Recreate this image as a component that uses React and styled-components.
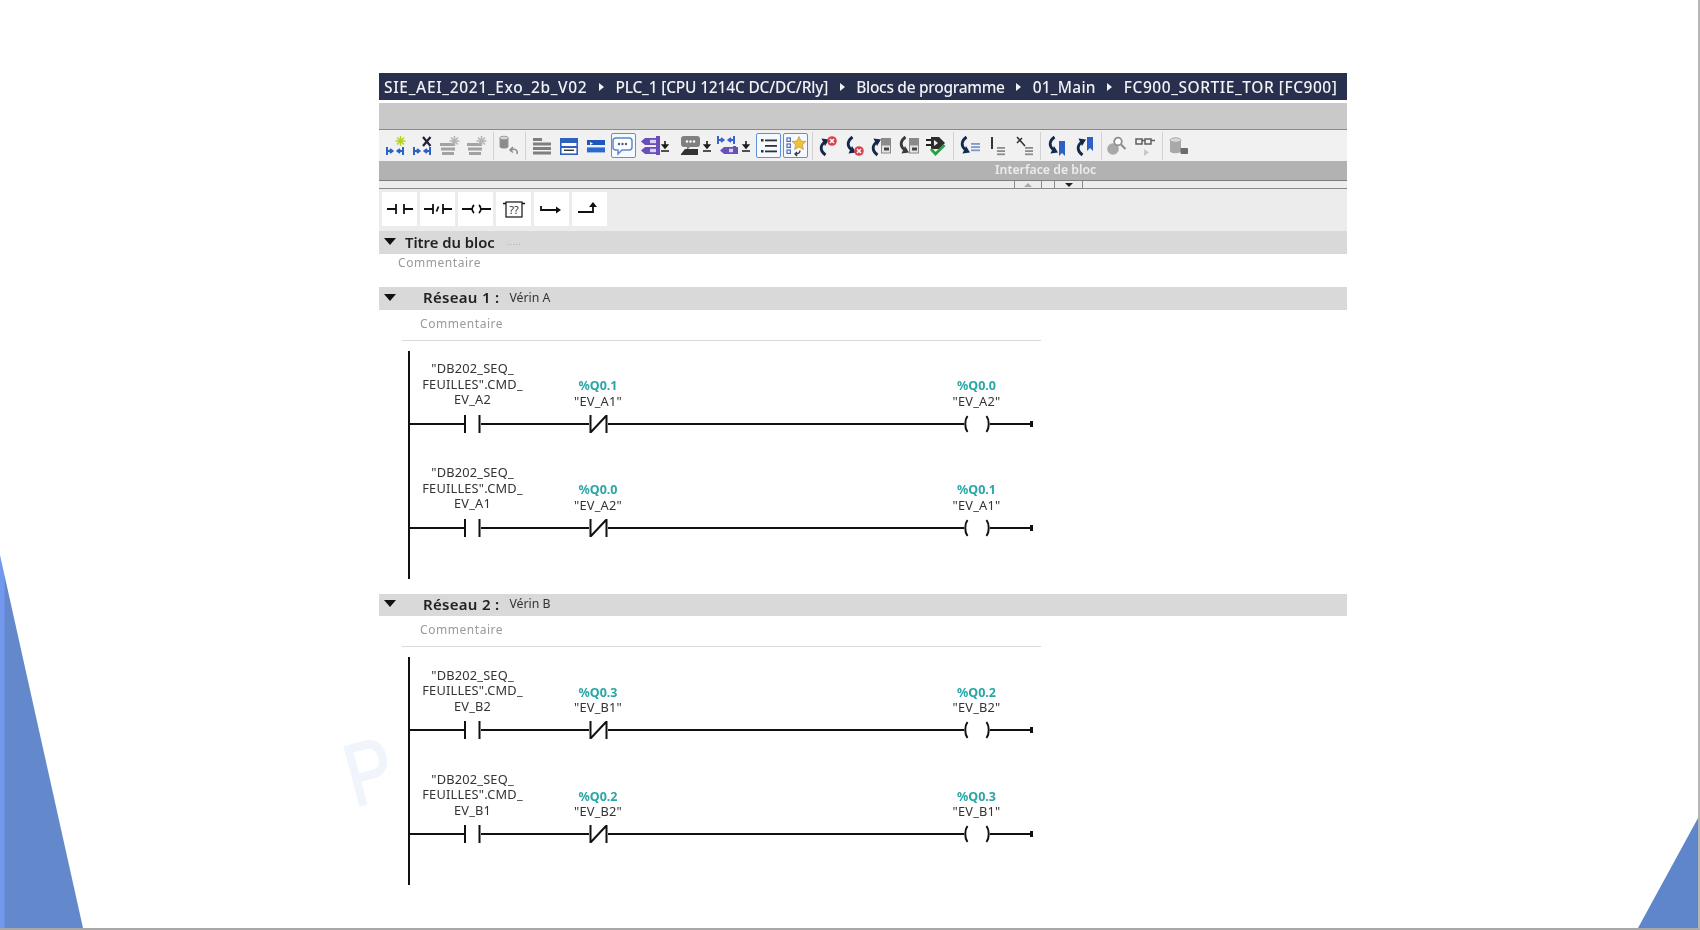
import React from "react";
import styled, { createGlobalStyle } from "styled-components";

const GlobalStyle = createGlobalStyle`
  html, body {
    margin: 0;
    padding: 0;
    background: #fff;
    overflow: hidden;
  }
`;

const FONT = `"Noto Sans", "Open Sans", sans-serif`;

/* small shared drawings for the toolbar */
const Brackets = ({ x = 0, y = 0, c = "#2b62c4" }) => (
  <path
    transform={`translate(${x} ${y})`}
    d="M1 0v8M1 4h4M4 2l2.500 2L4 6M17 0v8M17 4h-4M14 2l-2.500 2L14 6"
    fill="none"
    stroke={c}
    strokeWidth="2"
  />
);

const Stack = ({ c = "#a2a2a2" }) => (
  <g fill={c}>
    <rect x="1" y="8" width="14" height="3" />
    <rect x="2" y="12.500" width="14" height="3" />
    <rect x="3" y="17" width="12" height="3" />
  </g>
);

const Spark = ({ c }) => (
  <path d="M15.500 1v10M10.500 6h10M12 2.500l7 7M19 2.500l-7 7" stroke={c} strokeWidth="1.500" fill="none" />
);

const Cylinder = ({ c = "#a3a3a3" }) => (
  <g>
    <path d="M2 5v11c0 3 11 3 11 0V5z" fill={c} />
    <ellipse cx="7.500" cy="5" rx="5.500" ry="2.200" fill="#d8d8d8" stroke={c} />
  </g>
);

const Tag = ({ y = 0, c = "#6b4fb8" }) => (
  <g transform={`translate(0 ${y})`}>
    <path d="M4 2h14v7H4L0 5.500z" fill={c} />
    <rect x="9" y="3.800" width="7" height="3.400" fill="#d8cff2" />
  </g>
);

const DownLoad = ({ x }) => (
  <path transform={`translate(${x} 6)`} d="M4 0v5M1.500 4l2.500 3 2.500-3zM0 10h8" stroke="#1c1c1c" strokeWidth="1.600" fill="#1c1c1c" />
);

const Bubble = ({ c = "#5b8ad0", f = "#fff" }) => (
  <path d="M4 3h13q3 0 3 3v6q0 3-3 3H10l-4 4v-4H4q-3 0-3-3V6q0-3 3-3z" fill={f} stroke={c} strokeWidth="1.500" />
);

/* curved jump arrow: head on top, or on the bottom when flipped */
const CurveArrow = ({ flip, c = "#14284a" }) => (
  <g transform={flip ? "translate(0 22) scale(1 -1)" : undefined}>
    <path d="M10.500 20C5 16 5 11 9 7.500" fill="none" stroke={c} strokeWidth="2.800" />
    <path d="M6.500 3.500L14 4.500 10 11z" fill={c} />
  </g>
);

const RedX = ({ x, y }) => (
  <g transform={`translate(${x} ${y})`}>
    <circle r="4.800" fill="#d8434f" />
    <path d="M-2-2l4 4M2-2l-4 4" stroke="#fff" strokeWidth="1.500" />
  </g>
);

const Lines = ({ x = 11, y = 10, c = "#8d8d8d", w = 8 }) => (
  <g fill={c}>
    <rect x={x} y={y} width={w} height="1.800" />
    <rect x={x} y={y + 3.200} width={w} height="1.800" />
    <rect x={x} y={y + 6.400} width={w} height="1.800" />
  </g>
);

const Sheet01 = ({ x = 11 }) => (
  <g transform={`translate(${x} 3)`}>
    <rect width="10" height="7" fill="#8a8a8a" />
    <rect x=".5" y="7" width="9" height="8" fill="#e4e4e4" stroke="#8a8a8a" />
    <rect x="3" y="9.500" width="5" height="3" fill="#444" />
  </g>
);

const tools = [
  { w: 27, svg: <><Brackets x={1} y={12} /><Spark c="#b4d324" /></> },
  { w: 27, svg: <><Brackets x={1} y={12} /><path d="M11 2l7.500 9M18.500 2L11 11" stroke="#1d2233" strokeWidth="2.200" /></> },
  { w: 27, svg: <><Stack /><Spark c="#b4b4b4" /></> },
  { w: 27, svg: <><Stack /><Spark c="#b4b4b4" /></> },
  { sep: [2, 1] },
  { w: 27, svg: <><g transform="translate(1 -1) scale(.8)"><Cylinder c="#8c8c8c" /></g><path d="M20 19c1-4-2-6-6-4M16 12l-3 3 3 2.500" stroke="#8a8a8a" strokeWidth="1.500" fill="none" /></> },
  { sep: [3, 3] },
  {
    w: 27,
    svg: (
      <g fill="#7f7f7f">
        <rect x="2" y="3" width="9" height="3" />
        <rect x="2" y="7.500" width="18" height="3" />
        <rect x="2" y="12" width="18" height="3" />
        <rect x="2" y="16.500" width="18" height="3" />
      </g>
    ),
  },
  {
    w: 27,
    svg: (
      <g>
        <rect x="2.800" y="3.800" width="16.400" height="15.400" fill="#fff" stroke="#2f62bd" strokeWidth="1.600" />
        <rect x="3" y="4" width="16" height="4" fill="#2f62bd" />
        <rect x="3" y="11" width="16" height="2" fill="#2f62bd" />
        <rect x="6" y="14.600" width="10" height="1.400" fill="#333" />
      </g>
    ),
  },
  {
    w: 27,
    svg: (
      <g>
        <rect x="2" y="5" width="18" height="5" fill="#1f55bd" />
        <rect x="2" y="10" width="18" height="2.400" fill="#e8f0ff" />
        <rect x="2" y="12.400" width="18" height="5" fill="#2a6ad0" />
        <path d="M5 7l3 1.500-3 1.500z" fill="#fff" />
      </g>
    ),
  },
  { w: 27, on: true, svg: <><Bubble /><g fill="#3f5f92"><circle cx="7" cy="9" r="1.200" /><circle cx="10.500" cy="9" r="1.200" /><circle cx="14" cy="9" r="1.200" /></g></> },
  {
    w: 38,
    vb: 38,
    svg: (
      <>
        <g transform="translate(4 1)">
          <Tag />
          <Tag y={9} />
          <rect x="15" y="0" width="4" height="19" fill="#6b4fb8" />
        </g>
        <DownLoad x={24} />
      </>
    ),
  },
  {
    w: 38,
    vb: 38,
    svg: (
      <>
        <g transform="translate(6 0)">
          <path d="M3 1h13q3 0 3 3v5q0 3-3 3H9l-3 3v-3H3q-3 0-3-3V4q0-3 3-3z" fill="#808080" />
          <g fill="#fff"><circle cx="6" cy="6.500" r="1.200" /><circle cx="9.500" cy="6.500" r="1.200" /><circle cx="13" cy="6.500" r="1.200" /></g>
          <path d="M0 19l4-5h13v6H0z" fill="#333" />
        </g>
        <DownLoad x={28} />
      </>
    ),
  },
  {
    w: 42,
    vb: 42,
    svg: (
      <>
        <Brackets x={4} y={1} c="#3a62cf" />
        <g transform="translate(7 10)"><Tag /></g>
        <rect x="20" y="11" width="3" height="8" fill="#6b4fb8" />
        <DownLoad x={29} />
      </>
    ),
  },
  {
    w: 28,
    on: true,
    svg: (
      <g fill="#333">
        <rect x="3" y="4" width="2.500" height="2.500" />
        <rect x="7" y="4.500" width="12" height="1.800" />
        <rect x="7" y="10" width="12" height="1.800" />
        <rect x="3" y="15" width="2.500" height="2.500" />
        <rect x="7" y="15.500" width="12" height="1.800" />
      </g>
    ),
  },
  {
    w: 26,
    on: true,
    svg: (
      <>
        <g fill="none" stroke="#4f6fb5" strokeWidth="1.200">
          <rect x="2" y="3" width="3.400" height="3.400" />
          <rect x="2" y="9" width="3.400" height="3.400" />
          <rect x="2" y="15" width="3.400" height="3.400" />
        </g>
        <path d="M14 1.500l2 4.500 5 .5-3.600 3.200 1 4.800L14 12l-4.400 2.500 1-4.800L7 6.500l5-.5z" fill="#f0c23a" stroke="#b98d1e" strokeWidth=".6" />
        <path d="M15 15.500c0 2.500-2 3.500-5 3.500M12 17l-2 2 2 2" stroke="#333" strokeWidth="1.300" fill="none" />
      </>
    ),
  },
  { sep: [3, 0] },
  { w: 26, svg: <><CurveArrow /><RedX x={17} y={6} /></> },
  { w: 28, svg: <><CurveArrow flip /><RedX x={17} y={16} /></> },
  { w: 29, svg: <><g transform="translate(-3 0)"><CurveArrow /></g><Sheet01 /></> },
  { w: 27, svg: <><g transform="translate(-3 0)"><CurveArrow flip c="#3a3a3a" /></g><Sheet01 /></> },
  {
    w: 27,
    svg: (
      <>
        <path d="M1 5h5M1 10h5" stroke="#222" strokeWidth="1.800" />
        <path d="M6 2h8l6 6-6 6H6z" fill="#2d2d2d" />
        <path d="M9 5l4 3-4 3z" fill="#eee" />
        <path d="M6 14l4.500 5 9-9" stroke="#2e9e45" strokeWidth="2.800" fill="none" />
      </>
    ),
  },
  { sep: [3, 3] },
  { w: 27, svg: <><g transform="translate(-3 0)"><CurveArrow flip c="#122a50" /></g><Lines x={12} y={8} c="#7d9ad0" w={9} /></> },
  { w: 28, svg: <><rect x="4" y="2" width="2" height="12" fill="#333" /><Lines x={10} y={12} /></> },
  { w: 26, svg: <><path d="M3 2l8 9M3 8l5-5" stroke="#333" strokeWidth="1.600" /><Lines x={11} y={12} /></> },
  { sep: [2, 3] },
  { w: 27, svg: <><g transform="translate(-2 0)"><CurveArrow flip c="#122a50" /></g><path d="M13 6h6v15l-3-3-3 3z" fill="#2c62c8" /></> },
  { w: 27, svg: <><g transform="translate(-1 0)"><CurveArrow /></g><path d="M14 2h6v14l-3-3-3 3z" fill="#2c62c8" /></> },
  { sep: [3, 0] },
  {
    w: 28,
    svg: (
      <>
        <circle cx="8" cy="14" r="5.800" fill="#a8a8a8" />
        <circle cx="13" cy="6.500" r="3.800" fill="#fff" stroke="#8d8d8d" strokeWidth="1.800" />
        <path d="M16 9.500l4.500 4.500" stroke="#8d8d8d" strokeWidth="2.200" />
      </>
    ),
  },
  {
    w: 31,
    svg: (
      <>
        <path d="M2 4h6v5H2zM11 4h6v5h-6zM8 5.500h3M17 5.500h4" fill="none" stroke="#5f5f5f" strokeWidth="1.500" />
        <path d="M10 14l5 3.500-5 3.500z" fill="#c8c8c8" />
      </>
    ),
  },
  { sep: [1, 3] },
  { w: 26, svg: <><Cylinder c="#a9a9a9" /><rect x="12.500" y="13" width="7.500" height="6" rx="1" fill="#6c6c6c" /></> },
];

const Corners = styled.div`
  position: absolute;
  bottom: 0;
  ${(p) =>
    p.$side === "left"
      ? `left: 0; width: 83px; height: 373px;
         background: linear-gradient(90deg, #7399ee 0, #7399ee 4px, #6488cc 5px);
         clip-path: polygon(0 0, 100% 100%, 0 100%);`
      : `right: 0; width: 60px; height: 110px; background: #5f86cb;
         clip-path: polygon(100% 0, 100% 100%, 0 100%);`}
`;

const Watermark = styled.span`
  position: absolute;
  left: 340px;
  top: 728px;
  font: 400 88px/1 "Liberation Sans", sans-serif;
  color: #f0f5fb;
  -webkit-text-stroke: 2px #f0f5fb;
  transform: rotate(-15deg) scaleX(0.8);
`;

const Page = styled.div`
  position: relative;
  box-sizing: border-box;
  width: 1700px;
  height: 930px;
  padding: 73px 0 0 379px;
  background: #fff;
  border-right: 2px solid #b5b5b5;
  border-bottom: 2px solid #a8a8a8;
  font-family: ${FONT};
  overflow: hidden;
`;

const Panel = styled.div`
  position: relative;
  width: 968px;
  filter: blur(0.35px);
`;

const PathBar = styled.div`
  display: flex;
  align-items: center;
  gap: 11.500px;
  height: 27px;
  padding-left: 5px;
  background: #28304d;
  color: #f2f3f6;
  font-size: 15.500px;
  font-weight: 500;
  white-space: nowrap;
`;

const PathArrow = styled.span`
  width: 0;
  height: 0;
  border-left: 5px solid #f2f3f6;
  border-top: 4.500px solid transparent;
  border-bottom: 4.500px solid transparent;
`;

const Crumb = styled.span`
  letter-spacing: ${(p) => p.$ls}px;
`;

const EmptyBand = styled.div`
  height: 26px;
  margin-top: 3px;
  background: #c9c9c9;
  border-bottom: 1px solid #8a8a8a;
`;

const Toolbar = styled.div`
  display: flex;
  align-items: center;
  height: 31px;
  padding-left: 3.500px;
  background: #f1f1f1;
`;

const ToolSlot = styled.div`
  flex: none;
  display: flex;
  align-items: center;
  justify-content: center;
  width: ${(p) => p.$w}px;
  height: 26px;
`;

const ToolBox = styled.div`
  display: flex;
  align-items: center;
  justify-content: center;
  width: 25px;
  height: 25px;
  box-sizing: border-box;
  background: ${(p) => (p.$on ? "#f6f9ff" : "transparent")};
  border: ${(p) => (p.$on ? "1px solid #5f8fd8" : "0")};
  border-radius: 2px;
`;

const ToolSep = styled.span`
  flex: none;
  width: 1px;
  height: 28px;
  margin-left: ${(p) => p.$l}px;
  margin-right: ${(p) => p.$r}px;
  background: #d2d2d2;
`;

const InterfaceBand = styled.div`
  height: 19px;
  padding-left: 616px;
  background: #b2b2b2;
  border-bottom: 1px solid #7e7e7e;
  color: #ececec;
  font-size: 12.300px;
  font-weight: 600;
  line-height: 18px;
`;

const Strip = styled.div`
  display: flex;
  align-items: center;
  height: 7px;
  padding-left: 635px;
  background: #ececec;
  border-bottom: 1px solid #8a8a8a;
`;

const StripCell = styled.span`
  display: flex;
  align-items: center;
  justify-content: center;
  width: ${(p) => p.$w}px;
  height: 7px;
  border-left: 1px solid #888;
  &:last-child {
    border-right: 1px solid #888;
  }
`;

const StripTri = styled.i`
  width: 0;
  height: 0;
  border-left: 4px solid transparent;
  border-right: 4px solid transparent;
  ${(p) => (p.$up ? "border-bottom: 4px solid #aaa;" : "border-top: 4px solid #222;")}
`;

const Palette = styled.div`
  display: flex;
  align-items: flex-start;
  gap: 3px;
  height: 42px;
  padding: 3px 0 0 3px;
  box-sizing: border-box;
  background: #ececec;
`;

const PaletteButton = styled.div`
  display: flex;
  align-items: center;
  justify-content: center;
  width: 35px;
  height: 34px;
  background: #fff;
`;

const BlockTitle = styled.div`
  display: flex;
  align-items: center;
  box-sizing: border-box;
  height: 23px;
  padding: 0 0 2px 5px;
  background: #d9d9d9;
`;

const Caret = styled.i`
  flex: none;
  width: 0;
  height: 0;
  border-left: 6px solid transparent;
  border-right: 6px solid transparent;
  border-top: 7px solid #111;
  margin-right: ${(p) => p.$gap}px;
`;

const BlockName = styled.span`
  font-size: 14.800px;
  font-weight: 600;
  color: #222;
`;

const Dots = styled.span`
  margin-left: 12px;
  font-size: 9px;
  letter-spacing: 0.5px;
  color: #aaa;
`;

const BlockComment = styled.div`
  height: 33px;
  padding-left: 19px;
  font-size: 12px;
  letter-spacing: 0.55px;
  line-height: 17px;
  color: #9a9a9a;
`;

const NetworkHead = styled.div`
  display: flex;
  align-items: center;
  box-sizing: border-box;
  height: 22.500px;
  padding: 0 0 2px 5px;
  background: #d9d9d9;
`;

const NetworkName = styled.span`
  font-size: 15px;
  font-weight: 600;
  letter-spacing: 0.3px;
  color: #222;
`;

const NetworkLabel = styled.span`
  margin-left: 10px;
  font-size: 12.300px;
  color: #333;
`;

const NetworkComment = styled.div`
  box-sizing: border-box;
  width: 639px;
  height: 31px;
  margin-left: 23px;
  padding: 6px 0 0 18px;
  border-bottom: 1px solid #d9d9d9;
  font-size: 12px;
  letter-spacing: 0.55px;
  line-height: 16px;
  color: #9a9a9a;
`;

const Diagram = styled.div`
  display: flex;
  flex-direction: column;
  gap: 22px;
  box-sizing: border-box;
  width: 625px;
  margin: 10px 0 15px 29px;
  padding-bottom: 42px;
  border-left: 2px solid #111;
`;

const Rung = styled.div`
  display: flex;
  align-items: flex-end;
  height: 82px;
`;

const Cell = styled.div`
  flex: none;
  display: flex;
  flex-direction: column;
  align-items: stretch;
  width: ${(p) => p.$w}px;
`;

const Label = styled.div`
  padding-right: ${(p) => p.$shift || 0}px;
  text-align: center;
  font-size: 12.800px;
  letter-spacing: 0.2px;
  line-height: 15.500px;
  color: #333;
`;

const Address = styled(Label)`
  font-size: 12.500px;
  font-weight: 700;
  letter-spacing: 0;
  color: #2aa6a6;
`;

const SymbolRow = styled.div`
  display: flex;
  align-items: center;
  height: 18px;
  margin-top: ${(p) => p.$gap}px;
`;

const Wire = styled.span`
  flex: 1;
  height: 2px;
  background: #111;
`;

const WireEnd = styled.span`
  flex: none;
  width: 3px;
  height: 6px;
  background: #111;
`;

const LongWire = styled(Wire)`
  margin-bottom: 8px;
`;

const Drawing = styled.svg`
  flex: none;
  display: block;
`;

const NoContact = () => (
  <Drawing width="17" height="18" viewBox="0 0 17 18">
    <path d="M1 0v18M15.500 0v18" stroke="#111" strokeWidth="2" />
  </Drawing>
);

const NcContact = () => (
  <Drawing width="19" height="18" viewBox="0 0 19 18">
    <path d="M1.500 0v18M17.500 0v18M2 17L17 1" stroke="#111" strokeWidth="2" fill="none" />
  </Drawing>
);

const Coil = () => (
  <Drawing width="26" height="18" viewBox="0 0 26 18">
    <path d="M3.500 1C.5 5 .5 13 3.500 17M22.500 1C25.500 5 25.500 13 22.500 17" stroke="#111" strokeWidth="2" fill="none" />
  </Drawing>
);

const LadderRow = ({ tag, nc, coil }) => (
  <Rung>
    <Cell $w={125}>
      {tag.map((line) => (
        <Label key={line}>{line}</Label>
      ))}
      <SymbolRow $gap={7}>
        <Wire />
        <NoContact />
        <Wire />
      </SymbolRow>
    </Cell>
    <Cell $w={126}>
      <Address>{nc[0]}</Address>
      <Label>{nc[1]}</Label>
      <SymbolRow $gap={5.5}>
        <Wire />
        <NcContact />
        <Wire />
      </SymbolRow>
    </Cell>
    <LongWire />
    <Cell $w={110}>
      <Address $shift={3}>{coil[0]}</Address>
      <Label $shift={3}>{coil[1]}</Label>
      <SymbolRow $gap={5.5}>
        <Wire />
        <Coil />
        <Wire />
        <WireEnd />
      </SymbolRow>
    </Cell>
  </Rung>
);

const Network = ({ name, label, rungs }) => (
  <section>
    <NetworkHead>
      <Caret $gap={27} />
      <NetworkName>{name}</NetworkName>
      <NetworkLabel>{label}</NetworkLabel>
    </NetworkHead>
    <NetworkComment>Commentaire</NetworkComment>
    <Diagram>
      {rungs.map((r) => (
        <LadderRow key={r.tag[2]} {...r} />
      ))}
    </Diagram>
  </section>
);

const tagFor = (v) => [`"DB202_SEQ_`, `FEUILLES".CMD_`, v];

const networks = [
  {
    name: "Réseau 1 :",
    label: "Vérin A",
    rungs: [
      { tag: tagFor("EV_A2"), nc: ["%Q0.1", `"EV_A1"`], coil: ["%Q0.0", `"EV_A2"`] },
      { tag: tagFor("EV_A1"), nc: ["%Q0.0", `"EV_A2"`], coil: ["%Q0.1", `"EV_A1"`] },
    ],
  },
  {
    name: "Réseau 2 :",
    label: "Vérin B",
    rungs: [
      { tag: tagFor("EV_B2"), nc: ["%Q0.3", `"EV_B1"`], coil: ["%Q0.2", `"EV_B2"`] },
      { tag: tagFor("EV_B1"), nc: ["%Q0.2", `"EV_B2"`], coil: ["%Q0.3", `"EV_B1"`] },
    ],
  },
];

const crumbs = [
  { text: "SIE_AEI_2021_Exo_2b_V02", ls: 0.67 },
  { text: "PLC_1 [CPU 1214C DC/DC/Rly]", ls: -0.18 },
  { text: "Blocs de programme", ls: -0.3 },
  { text: "01_Main", ls: 0.25 },
  { text: "FC900_SORTIE_TOR [FC900]", ls: 0.54 },
];

const paletteIcons = [
  <path d="M2 11h9M11 6v10M19 6v10M19 11h9" />,
  <path d="M1 11h9M10 6v10M13.500 13.500l2-5M20 6v10M20 11h9" />,
  <path d="M1 11h10M13 7c-2.500 2.500-2.500 5.500 0 8M18 7c2.500 2.500 2.500 5.500 0 8M20 11h10" />,
  <>
    <rect x="7" y="4" width="16" height="15" strokeWidth="1.200" />
    <path d="M4 5.500h3M23 5.500h3" strokeWidth="1.400" />
    <text x="15" y="16" textAnchor="middle" fontSize="11" fill="#333" stroke="none" fontFamily="Noto Sans">??</text>
  </>,
  <>
    <path d="M4 8v4h16" />
    <path d="M19 8.500l5 3.500-5 3.500z" fill="#111" stroke="none" />
  </>,
  <>
    <path d="M3 14h15V8" />
    <path d="M14 9l4-5 4 5z" fill="#111" stroke="none" />
  </>,
];

export default function App() {
  return (
    <>
      <GlobalStyle />
      <Page>
        <Corners $side="left" />
        <Corners $side="right" />
        <Watermark>P</Watermark>
        <Panel>
          <PathBar>
            {crumbs.map((c, i) => (
              <React.Fragment key={c.text}>
                {i > 0 && <PathArrow />}
                <Crumb $ls={c.ls}>{c.text}</Crumb>
              </React.Fragment>
            ))}
          </PathBar>
          <EmptyBand />
          <Toolbar>
            {tools.map((t, i) =>
              t.sep ? (
                <ToolSep key={i} $l={t.sep[0]} $r={t.sep[1]} />
              ) : (
                <ToolSlot key={i} $w={t.w}>
                  {t.vb ? (
                    <svg width={t.vb} height="22" viewBox={`0 0 ${t.vb} 22`}>{t.svg}</svg>
                  ) : (
                    <ToolBox $on={t.on}>
                      <svg width="22" height="22" viewBox="0 0 22 22">{t.svg}</svg>
                    </ToolBox>
                  )}
                </ToolSlot>
              )
            )}
          </Toolbar>
          <InterfaceBand>Interface de bloc</InterfaceBand>
          <Strip>
            <StripCell $w={26}><StripTri $up /></StripCell>
            <StripCell $w={12} />
            <StripCell $w={27}><StripTri /></StripCell>
          </Strip>
          <Palette>
            {paletteIcons.map((d, i) => (
              <PaletteButton key={i}>
                <svg width="30" height="22" viewBox="0 0 30 22" fill="none" stroke="#111" strokeWidth="1.800">{d}</svg>
              </PaletteButton>
            ))}
          </Palette>
          <BlockTitle>
            <Caret $gap={9} />
            <BlockName>Titre du bloc</BlockName>
            <Dots>.....</Dots>
          </BlockTitle>
          <BlockComment>Commentaire</BlockComment>
          {networks.map((n) => (
            <Network key={n.name} {...n} />
          ))}
        </Panel>
      </Page>
    </>
  );
}
